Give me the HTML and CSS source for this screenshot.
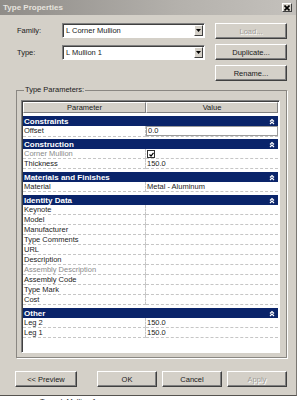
FILE: index.html
```html
<!DOCTYPE html>
<html lang="en">
<head>
    <meta charset="UTF-8">
    <meta name="viewport" content="width=device-width, initial-scale=1.0">
    <title>Type Properties</title>
    <link rel="stylesheet" href="styles.css">
</head>
<body>
    <div class="dialog">
        <div class="titlebar">
            <span class="title">Type Properties</span>
            <span class="close">
                <svg width="6" height="6" viewBox="0 0 6 6"><path d="M0.5 0.5 L5.5 5.5 M5.5 0.5 L0.5 5.5" stroke="#000" stroke-width="1.6"/></svg>
            </span>
        </div>

        <div class="content">
            <div class="top">
                <div class="fields">
                    <div class="field">
                        <label>Family:</label>
                        <div class="combo">
                            <span>L Corner Mullion</span>
                            <span class="drop"><svg width="5" height="3" viewBox="0 0 5 3"><path d="M0 0 H5 L2.5 3 Z" fill="#000"/></svg></span>
                        </div>
                    </div>
                    <div class="field">
                        <label>Type:</label>
                        <div class="combo">
                            <span>L Mullion 1</span>
                            <span class="drop"><svg width="5" height="3" viewBox="0 0 5 3"><path d="M0 0 H5 L2.5 3 Z" fill="#000"/></svg></span>
                        </div>
                    </div>
                </div>
                <div class="side-buttons">
                    <button class="btn disabled">Load...</button>
                    <button class="btn">Duplicate...</button>
                    <button class="btn">Rename...</button>
                </div>
            </div>

            <fieldset class="group">
                <legend>Type Parameters:</legend>
                <div class="grid">
                    <div class="row head">
                        <div class="hcell">Parameter</div>
                        <div class="hcell">Value</div>
                    </div>

                    <div class="group-head"><span>Constraints</span><svg class="fold" width="6" height="7" viewBox="0 0 6 7"><path d="M1 3.5 L3 1.5 L5 3.5 M1 6 L3 4 L5 6" stroke="#fff" stroke-width="1.2" fill="none"/></svg></div>
                    <div class="row">
                        <div class="cell name">Offset</div>
                        <div class="cell value"><span class="edit">0.0</span></div>
                    </div>

                    <div class="group-head"><span>Construction</span><svg class="fold" width="6" height="7" viewBox="0 0 6 7"><path d="M1 3.5 L3 1.5 L5 3.5 M1 6 L3 4 L5 6" stroke="#fff" stroke-width="1.2" fill="none"/></svg></div>
                    <div class="row">
                        <div class="cell name muted">Corner Mullion</div>
                        <div class="cell value"><span class="check"><svg width="5" height="5" viewBox="0 0 5 5"><path d="M0.5 2.5 L2 4 L4.5 0.8" stroke="#000" stroke-width="1.2" fill="none"/></svg></span></div>
                    </div>
                    <div class="row">
                        <div class="cell name">Thickness</div>
                        <div class="cell value">150.0</div>
                    </div>

                    <div class="group-head"><span>Materials and Finishes</span><svg class="fold" width="6" height="7" viewBox="0 0 6 7"><path d="M1 3.5 L3 1.5 L5 3.5 M1 6 L3 4 L5 6" stroke="#fff" stroke-width="1.2" fill="none"/></svg></div>
                    <div class="row">
                        <div class="cell name">Material</div>
                        <div class="cell value">Metal - Aluminum</div>
                    </div>

                    <div class="group-head"><span>Identity Data</span><svg class="fold" width="6" height="7" viewBox="0 0 6 7"><path d="M1 3.5 L3 1.5 L5 3.5 M1 6 L3 4 L5 6" stroke="#fff" stroke-width="1.2" fill="none"/></svg></div>
                    <div class="row"><div class="cell name">Keynote</div><div class="cell value"></div></div>
                    <div class="row"><div class="cell name">Model</div><div class="cell value"></div></div>
                    <div class="row"><div class="cell name">Manufacturer</div><div class="cell value"></div></div>
                    <div class="row"><div class="cell name">Type Comments</div><div class="cell value"></div></div>
                    <div class="row"><div class="cell name">URL</div><div class="cell value"></div></div>
                    <div class="row"><div class="cell name">Description</div><div class="cell value"></div></div>
                    <div class="row"><div class="cell name muted">Assembly Description</div><div class="cell value"></div></div>
                    <div class="row"><div class="cell name">Assembly Code</div><div class="cell value"></div></div>
                    <div class="row"><div class="cell name">Type Mark</div><div class="cell value"></div></div>
                    <div class="row"><div class="cell name">Cost</div><div class="cell value"></div></div>

                    <div class="group-head"><span>Other</span><svg class="fold" width="6" height="7" viewBox="0 0 6 7"><path d="M1 3.5 L3 1.5 L5 3.5 M1 6 L3 4 L5 6" stroke="#fff" stroke-width="1.2" fill="none"/></svg></div>
                    <div class="row">
                        <div class="cell name">Leg 2</div>
                        <div class="cell value">150.0</div>
                    </div>
                    <div class="row">
                        <div class="cell name">Leg 1</div>
                        <div class="cell value">150.0</div>
                    </div>
                </div>
            </fieldset>

            <div class="footer">
                <button class="btn preview">&lt;&lt; Preview</button>
                <button class="btn">OK</button>
                <button class="btn">Cancel</button>
                <button class="btn disabled">Apply</button>
            </div>
        </div>
    </div>
    <div class="below">Type: L Mullion 1</div>
</body>
</html>
```

FILE: styles.css
```css
* {
    box-sizing: border-box;
    margin: 0;
    padding: 0;
}

body {
    background: #fff;
    font-family: "Liberation Sans", Arial, sans-serif;
    font-size: 7.5px;
    color: #1a1a1a;
    width: 298px;
    height: 400px;
    overflow: hidden;
}

.dialog {
    width: 297px;
    height: 396px;
    background: #d4d0c8;
    border-right: 1px solid #7a7772;
    border-bottom: 1px solid #55534f;
}

.titlebar {
    height: 15px;
    display: flex;
    align-items: center;
    justify-content: space-between;
    padding: 0 3px 0 3px;
    background: linear-gradient(to right, #8f8c88, #b4b1ac 60%, #c4c1bc);
}

.title {
    font-size: 8px;
    font-weight: bold;
    color: #e6e3de;
}

.close {
    width: 10px;
    height: 9px;
    display: flex;
    align-items: center;
    justify-content: center;
    background: #d4d0c8;
    border: 1px solid;
    border-color: #fff #404040 #404040 #fff;
    margin-right: 1px;
}

.content {
    padding: 8px 9px 0 16px;
}

.top {
    display: flex;
    justify-content: space-between;
}

.fields {
    display: flex;
    flex-direction: column;
    gap: 7px;
    padding-left: 1px;
}

.field {
    display: flex;
    align-items: center;
}

.field label {
    width: 45px;
}

.combo {
    width: 143px;
    height: 15px;
    display: flex;
    align-items: center;
    justify-content: space-between;
    background: #fff;
    border: 1px solid;
    border-color: #808080 #fff #fff #808080;
    box-shadow: inset 1px 1px 0 #404040;
    padding: 0 1px 0 3px;
}

.drop {
    width: 9px;
    height: 11px;
    display: flex;
    align-items: center;
    justify-content: center;
    background: #d4d0c8;
    border: 1px solid;
    border-color: #fff #404040 #404040 #fff;
}

.side-buttons {
    display: flex;
    flex-direction: column;
    gap: 5px;
}

.btn {
    width: 72px;
    height: 16px;
    font-family: inherit;
    font-size: 7.5px;
    color: #1a1a1a;
    background: #d4d0c8;
    border: 1px solid;
    border-color: #fff #404040 #404040 #fff;
    box-shadow: inset -1px -1px 0 #808080;
}

.btn.disabled {
    color: #a09d98;
    text-shadow: 1px 1px 0 #fff;
}

.group {
    margin-top: 4px;
    border: 1px solid #8a8782;
    box-shadow: 1px 1px 0 #fff;
    padding: 5px 6px 4px 4px;
}

.group legend {
    margin-left: 3px;
    padding: 0 1px;
    line-height: 10px;
}

.grid {
    height: 253px;
    background: #fff;
    border: 1px solid;
    border-color: #808080 #fff #fff #808080;
    box-shadow: inset 1px 1px 0 #404040;
    padding: 1px 1px 0 1px;
}

.row {
    display: grid;
    grid-template-columns: 123px 1fr;
    height: 10px;
}

.row.head {
    height: 11px;
}

.hcell {
    text-align: center;
    line-height: 9px;
    background: #d4d0c8;
    border: 1px solid;
    border-color: #fff #808080 #808080 #fff;
}

.cell {
    line-height: 9px;
    border-bottom: 1px dashed #c6c6c6;
    padding-left: 1px;
    white-space: nowrap;
}

.cell.name {
    border-right: 1px dashed #c6c6c6;
}

.cell.muted {
    color: #8a8a8a;
}

.edit {
    display: block;
    height: 10px;
    margin-left: -1px;
    padding-left: 1px;
    border: 1px solid #9a9a9a;
    line-height: 8px;
}

.check {
    display: flex;
    width: 8px;
    height: 8px;
    margin-top: 1px;
    align-items: center;
    justify-content: center;
    border: 1px solid #333;
    background: #fff;
}

.group-head {
    margin-top: 3px;
    height: 10px;
    display: flex;
    align-items: center;
    justify-content: space-between;
    padding: 0 3px 0 1px;
    background: #0a246a;
    color: #fff;
    font-size: 8px;
    font-weight: bold;
}

.footer {
    display: flex;
    gap: 5px;
    margin-top: 13px;
    padding-left: 0;
}

.footer .btn {
    width: 60px;
}

.footer .btn.preview {
    width: 62px;
    margin-right: 15px;
    margin-left: -1px;
}

.below {
    padding: 1px 0 0 40px;
    line-height: 9px;
    color: #333;
}
```
